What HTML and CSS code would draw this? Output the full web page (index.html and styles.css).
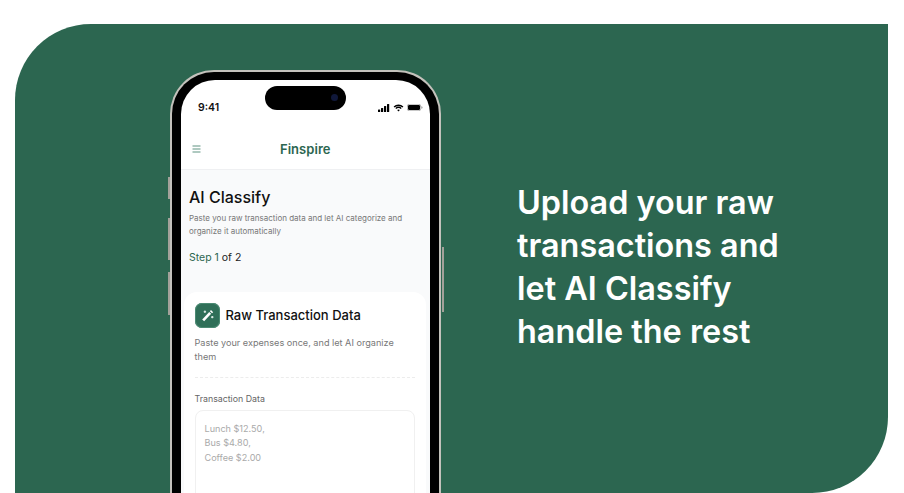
FILE: index.html
```html
<!DOCTYPE html>
<html lang="en">
<head>
<meta charset="utf-8">
<title>Finspire AI Classify</title>
<link rel="stylesheet" href="styles.css">
</head>
<body>
<main class="panel">
  <div class="phone">
    <span class="side-btn btn-mute"></span>
    <span class="side-btn btn-up"></span>
    <span class="side-btn btn-down"></span>
    <span class="side-btn btn-power"></span>
    <div class="bezel">
      <div class="screen">
        <span class="island"><span class="camera"></span></span>
        <div class="status">
          <span class="time">9:41</span>
          <span class="status-icons">
            <svg width="12" height="8" viewBox="0 0 12 8"><rect x="0" y="5.500" width="2.200" height="2.500" rx=".5"/><rect x="3" y="4" width="2.200" height="4" rx=".5"/><rect x="6" y="2" width="2.200" height="6" rx=".5"/><rect x="9" y="0" width="2.200" height="8" rx=".5"/></svg>
            <svg width="11" height="8" viewBox="0 0 11 8"><path d="M5.500 1.900a6 6 0 0 1 4 1.600l.9-1A7.400 7.400 0 0 0 5.500.5 7.400 7.400 0 0 0 .6 2.500l.9 1a6 6 0 0 1 4-1.600z"/><path d="M5.500 4a3.300 3.300 0 0 1 2.300.9l.9-1a4.700 4.700 0 0 0-6.400 0l.9 1A3.300 3.300 0 0 1 5.500 4z"/><path d="M5.500 5.400c-.5 0-1 .2-1.300.5l1.300 1.600 1.300-1.600c-.3-.3-.8-.5-1.300-.5z"/></svg>
            <svg width="16" height="7" viewBox="0 0 16 7"><rect x=".3" y=".3" width="13.400" height="6.400" rx="1.800" fill="none" stroke="#000" stroke-opacity=".45" stroke-width=".6"/><rect x="1" y="1" width="12" height="5" rx="1.200"/><path d="M14.500 2.300c.6.200 1 .7 1 1.200s-.4 1-1 1.200z" opacity=".5"/></svg>
          </span>
        </div>
        <header class="app-bar">
          <svg class="menu" width="9" height="8" viewBox="0 0 9 8"><path d="M.5 1h8M.5 4h8M.5 7h8" fill="none" stroke="#5f9381" stroke-width="1"/></svg>
          <span class="brand">Finspire</span>
        </header>
        <section class="content">
          <h1 class="title">AI Classify</h1>
          <p class="lead">Paste you raw transaction data and let AI categorize and organize it automatically</p>
          <p class="step"><span class="step-on">Step 1</span> of 2</p>
          <div class="card">
            <div class="card-head">
              <span class="card-icon">
                <svg width="13" height="13" viewBox="0 0 12 12"><path d="M2 10.500 8.500 3.500" fill="none" stroke="#fff" stroke-width="2.400"/><path d="M8.700 1.500l2 2" fill="none" stroke="#fff" stroke-width="1.500"/><path d="M2.500 2.500h2.200M3.600 1.400v2.200M9.300 7.500h2.200M10.400 6.400v2.200" fill="none" stroke="#e6f2ed" stroke-width="1"/></svg>
              </span>
              <h2 class="card-title">Raw Transaction Data</h2>
            </div>
            <p class="card-text">Paste your expenses once, and let AI organize them</p>
            <div class="dash"></div>
            <label class="field-label">Transaction Data</label>
            <div class="textarea">
              <span>Lunch $12.50,</span>
              <span>Bus $4.80,</span>
              <span>Coffee $2.00</span>
            </div>
          </div>
        </section>
      </div>
    </div>
  </div>
  <h2 class="headline">Upload your raw transactions and let AI Classify handle the rest</h2>
</main>
</body>
</html>
```
FILE: styles.css
```css
* { box-sizing: border-box; }
html, body { margin: 0; height: 100%; background: #fff; overflow: hidden; }
body { padding: 24px 16px 0 15px; font-family: Inter, "Liberation Sans", sans-serif; }
h1, h2, p { margin: 0; }

.panel {
  height: 469px;
  background: #2c6650;
  border-radius: 76px 0 76px 0;
  display: flex;
  align-items: flex-start;
  padding: 46px 0 0 155px;
  overflow: hidden;
}

.phone {
  position: relative;
  flex: none;
  width: 271px;
  height: 423px;
  border: solid #c4c2bc;
  border-width: 2.500px 2.500px 0;
  border-radius: 44px 44px 0 0;
  background: #000;
}
.side-btn { position: absolute; width: 2px; background: #a3a19a; }
.btn-mute { left: -4.500px; top: 105px; height: 22px; }
.btn-up { left: -4.500px; top: 146px; height: 42px; }
.btn-down { left: -4.500px; top: 200px; height: 43px; }
.btn-power { right: -4.500px; top: 175px; height: 65px; }

.bezel { height: 100%; padding: 7.500px 9px 0 8.500px; }
.screen {
  position: relative;
  height: 100%;
  background: #fff;
  border-radius: 34px 34px 0 0;
  overflow: hidden;
}
.island {
  position: absolute;
  top: 6px;
  left: 84px;
  width: 81px;
  height: 24px;
  background: #000;
  border-radius: 12px;
}
.camera {
  position: absolute;
  top: 8px;
  right: 8px;
  width: 7px;
  height: 7px;
  border-radius: 50%;
  background: #10183a;
}

.status {
  height: 42px;
  display: flex;
  align-items: flex-end;
  justify-content: space-between;
  padding: 0 7px 8px 17.500px;
}
.time { font-size: 10.500px; font-weight: 600; color: #111; line-height: 13px; }
.status-icons { display: flex; align-items: center; gap: 3px; padding-bottom: 2px; }

.app-bar {
  position: relative;
  height: 48px;
  display: flex;
  align-items: center;
  justify-content: center;
  border-bottom: 1px solid #eff0f2;
  padding-top: 7px;
}
.menu { position: absolute; left: 11px; top: 23px; }
.brand { font-size: 13px; font-weight: 600; color: #2c6650; letter-spacing: .05px; }

.content { background: #f9fafb; padding: 17px 4px 0 3px; height: 330px; }
.title { font-size: 16px; font-weight: 500; color: #111; line-height: 20px; padding-left: 5.500px; }
.lead { font-size: 8px; line-height: 13px; color: #777; padding: 5px 8px 0 5.500px; }
.step { font-size: 10.500px; line-height: 14px; color: #222; padding: 13px 0 0 5.500px; }
.step-on { color: #2c6650; }

.card {
  margin-top: 27px;
  background: #fff;
  border-radius: 13px 13px 0 0;
  height: 220px;
  padding: 11px 11px 0;
}
.card-head { display: flex; align-items: center; gap: 6px; height: 25px; }
.card-icon {
  flex: none;
  width: 25px;
  height: 25px;
  border-radius: 7px;
  background: #2f6f58;
  box-shadow: inset 0 0 0 1px #4b8a73;
  display: flex;
  align-items: center;
  justify-content: center;
}
.card-title { font-size: 13px; line-height: 25px; padding-top: 1px; font-weight: 500; color: #111; }
.card-text { font-size: 9.150px; line-height: 14.400px; color: #777; padding-top: 8.500px; }
.dash { margin-top: 12px; border-top: 1px dashed #ececec; }
.field-label { display: block; margin-top: 15px; font-size: 8.800px; line-height: 12px; color: #666; }
.textarea {
  margin-top: 5px;
  height: 110px;
  border: 1px solid #f0f0f0;
  border-radius: 8px;
  padding: 11px 9px;
  display: flex;
  flex-direction: column;
  font-size: 9.100px;
  line-height: 14.500px;
  color: #aaa;
}

.headline {
  margin: 111px 0 0 76px;
  width: 290px;
  flex: none;
  font-size: 32.400px;
  font-weight: 600;
  line-height: 43px;
  color: #fff;
}
```
